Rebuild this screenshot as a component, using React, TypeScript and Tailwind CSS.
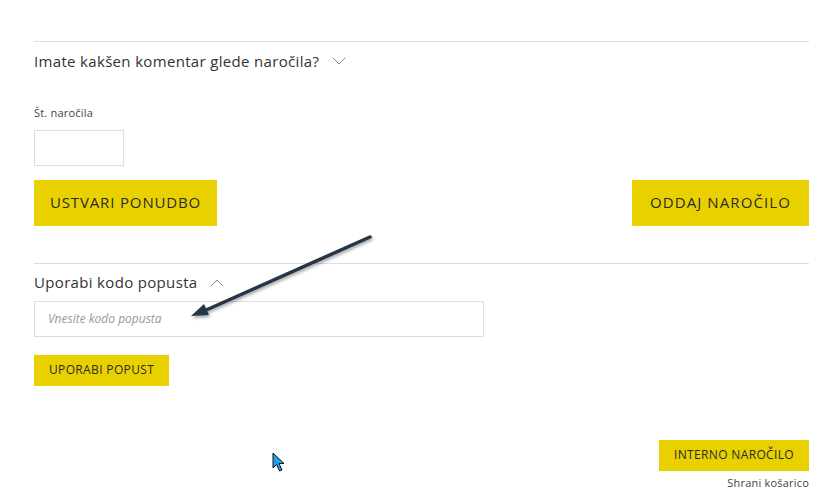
import { ChevronDown, ChevronUp } from "lucide-react";

const Arrow = () => (
	<svg
		className="absolute left-0 top-0 pointer-events-none"
		width="820"
		height="504"
		viewBox="0 0 820 504"
	>
		<defs>
			<filter id="sh" x="-20%" y="-20%" width="140%" height="140%">
				<feDropShadow dx="1" dy="2" stdDeviation="1.5" floodColor="#000" floodOpacity="0.35" />
			</filter>
		</defs>
		<g filter="url(#sh)">
			<line x1="370" y1="237" x2="204" y2="311" stroke="#283447" strokeWidth="3.5" strokeLinecap="round" />
			<polygon points="191,316 204,304 209,315" fill="#283447" />
		</g>
	</svg>
);

const Cursor = () => (
	<svg className="absolute left-[272px] top-[452px]" width="16" height="22" viewBox="0 0 16 22">
		<path
			d="M1 1 L1 16 L4.5 12.5 L7.5 19 L10 18 L7 11.5 L12 11.5 Z"
			fill="#1aa3e8"
			stroke="#111"
			strokeWidth="1"
			strokeLinejoin="round"
		/>
	</svg>
);

const YellowButton = ({ children, big, wide }: { children: string; big?: boolean; wide?: boolean }) => (
	<button
		className={
			big
				? wide
					? "bg-[#e9d100] text-[#2b2b2b] text-[15px] h-[46px] px-[18px] uppercase tracking-[1.1px]"
					: "bg-[#e9d100] text-[#2b2b2b] text-[15px] h-[46px] px-4 uppercase tracking-[0.85px]"
				: "bg-[#e9d100] text-[#2b2b2b] text-[12px] h-[31px] px-[15px] uppercase tracking-[0.35px]"
		}
	>
		{children}
	</button>
);

export default function App() {
	return (
		<div
			className="relative w-[820px] h-[504px] bg-white overflow-hidden text-[#333]"
			style={{ fontFamily: '"Open Sans", "DejaVu Sans", sans-serif' }}
		>
			<div className="pl-[34px] pr-[11px] pt-[41px]">
				<section className="border-t border-[#dddddd]">
					<div className="flex items-center gap-2 mt-[9px] h-[20px]">
						<span className="text-[15px] text-[#333] tracking-[0.33px]">Imate kakšen komentar glede naročila?</span>
						<ChevronDown size={24} strokeWidth={1} className="text-[#888]" />
					</div>
					<div className="mt-[34px] text-[11px] text-[#444] tracking-[0.2px]">Št. naročila</div>
					<input className="block mt-[8px] w-[90px] h-[36px] border border-[#dddddd] outline-none" />
					<div className="flex justify-between mt-[14px]">
						<YellowButton big>Ustvari ponudbo</YellowButton>
						<YellowButton big wide>Oddaj naročilo</YellowButton>
					</div>
				</section>
				<section className="border-t border-[#dddddd] mt-[37px]">
					<div className="flex items-center gap-2 mt-[9px] h-[20px]">
						<span className="text-[15px] text-[#333] tracking-[0.33px]">Uporabi kodo popusta</span>
						<ChevronUp size={24} strokeWidth={1} className="text-[#888]" />
					</div>
					<input
						placeholder="Vnesite kodo popusta"
						className="block mt-[8px] w-[450px] h-[36px] border border-[#dddddd] px-[13px] text-[12px] italic placeholder:text-[#999] outline-none"
					/>
					<div className="mt-[18px]">
						<YellowButton>Uporabi popust</YellowButton>
					</div>
				</section>
				<div className="flex flex-col items-end mt-[54px]">
					<YellowButton>Interno naročilo</YellowButton>
					<a className="mt-[4px] text-[11px] text-[#444] tracking-[0.2px]">Shrani košarico</a>
				</div>
			</div>
			<Arrow />
			<Cursor />
		</div>
	);
}
